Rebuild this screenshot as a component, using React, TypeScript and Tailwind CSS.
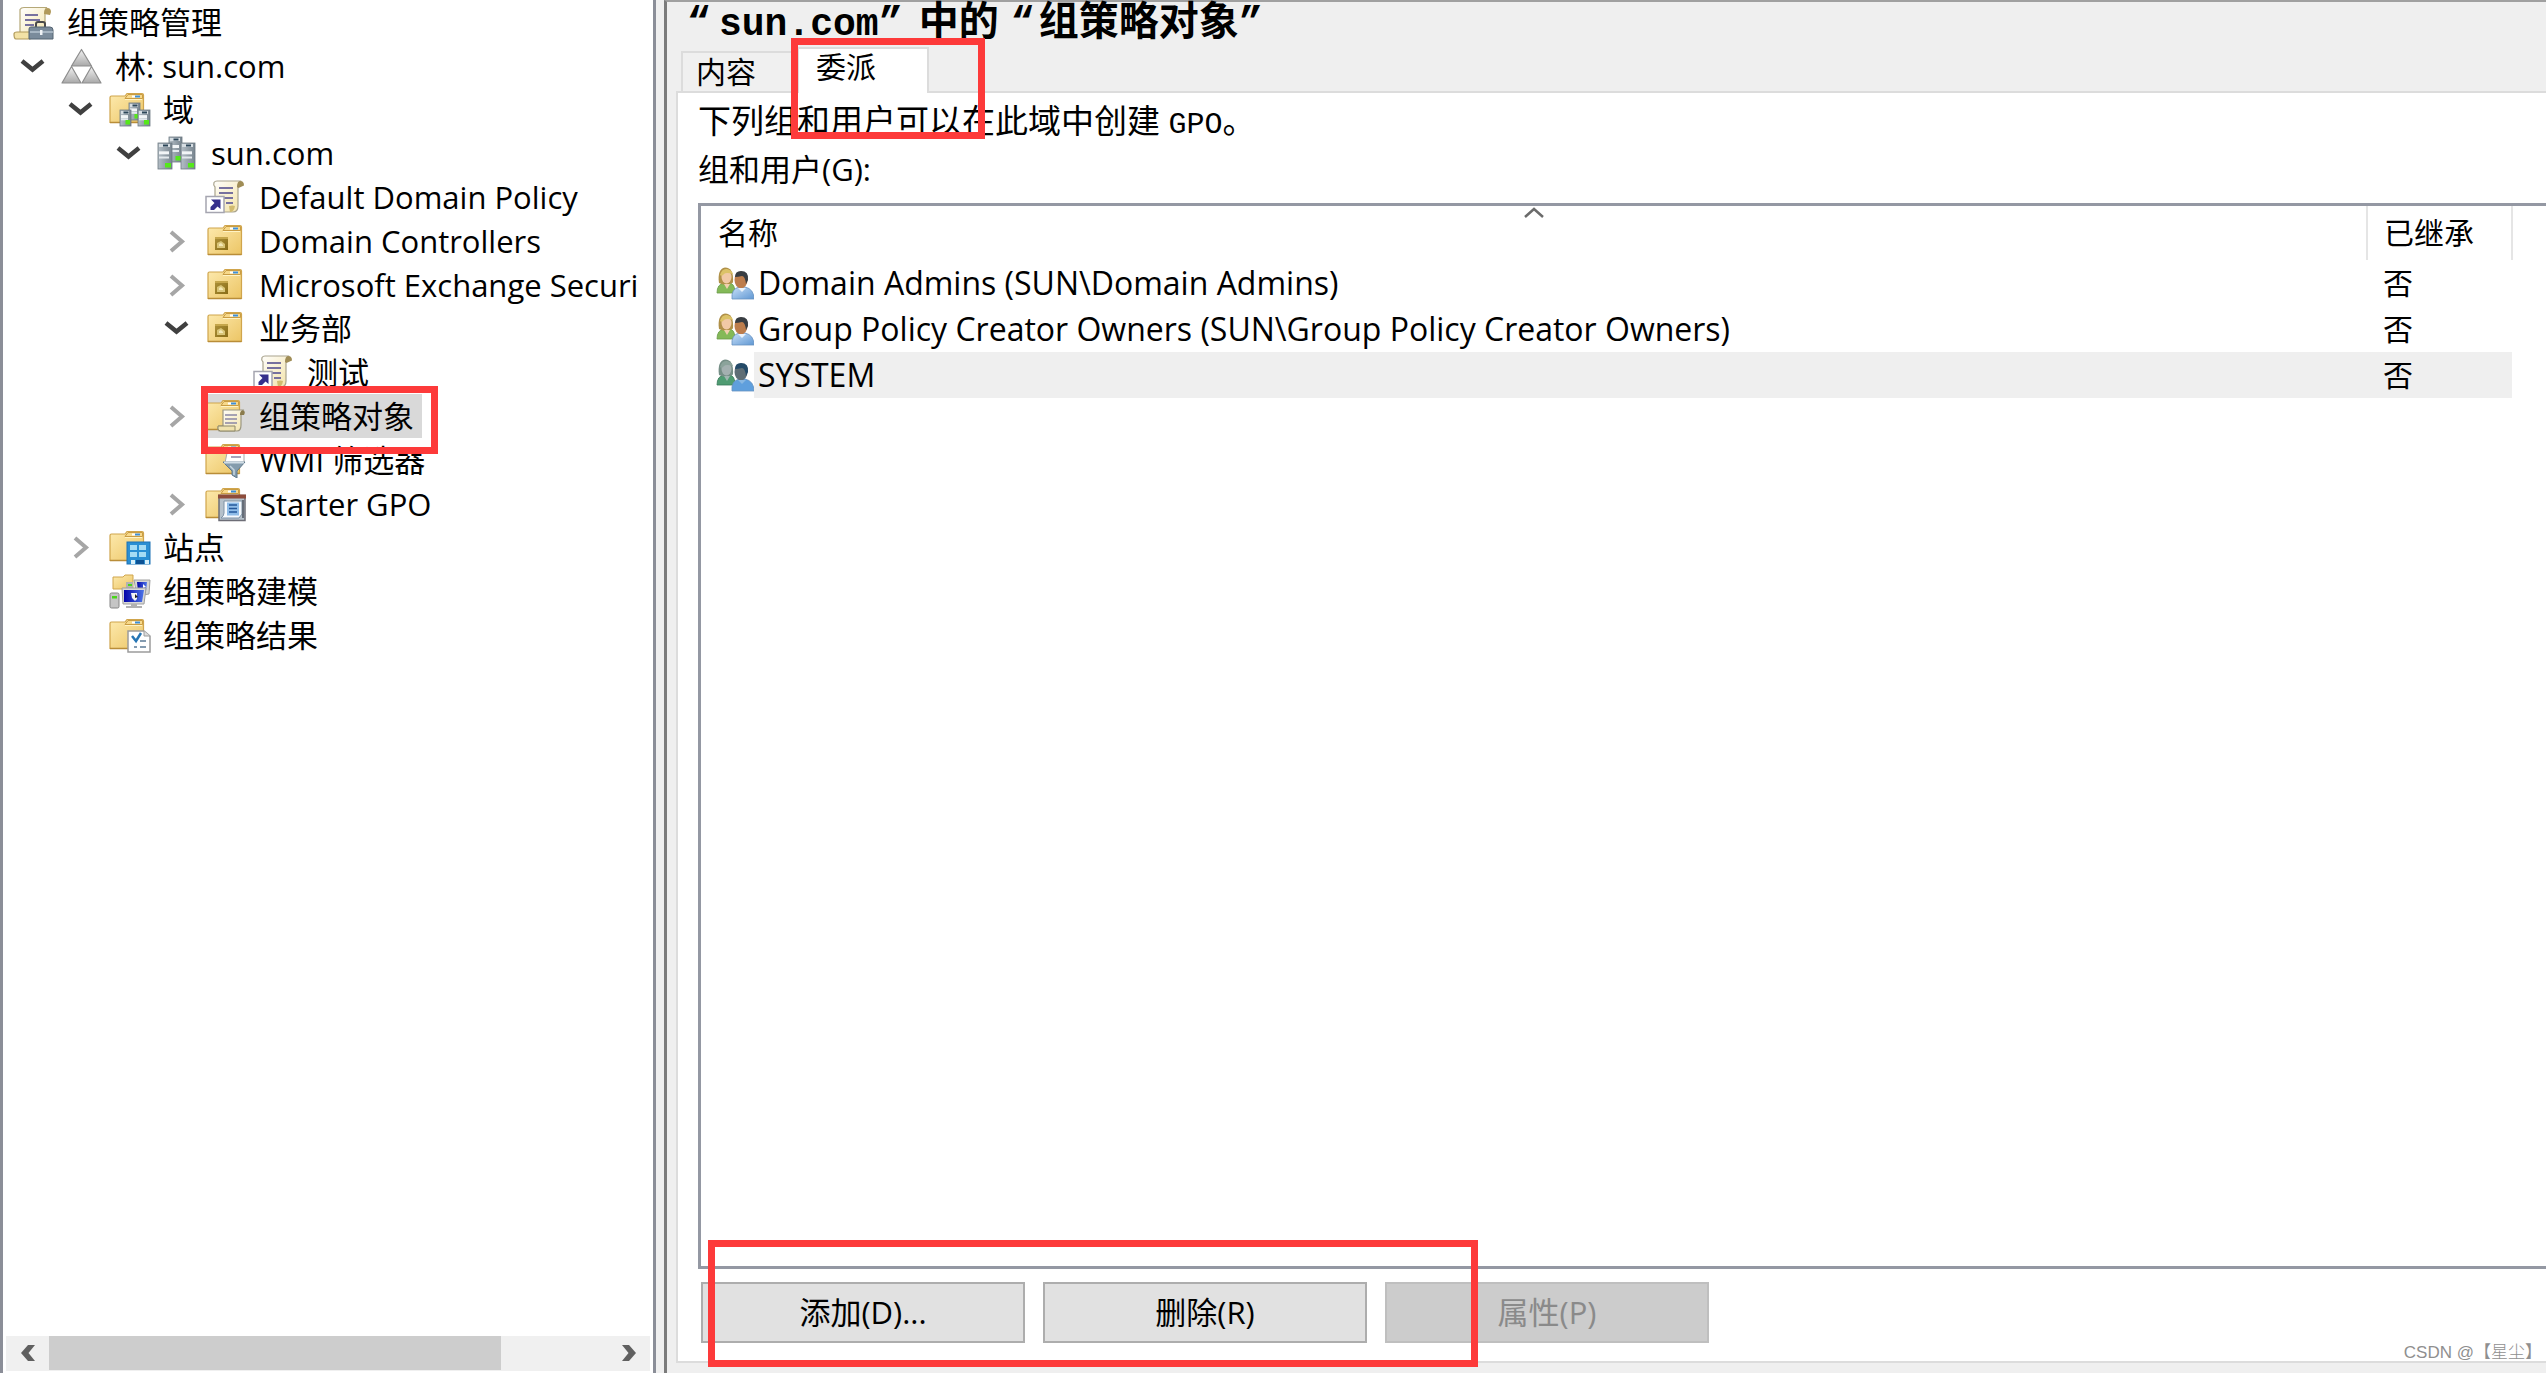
import { useState } from "react"
import type { ReactNode } from "react"
import { clsx } from "clsx"

type TreeNode = {
  label: string
  depth: number
  icon: ReactNode
  state?: "open" | "closed"
  selected?: boolean
}

function Defs() {
  return (
    <svg width="0" height="0" className="absolute" aria-hidden="true">
      <defs>
        <linearGradient id="folder" x1="0" y1="0" x2="1" y2="1">
          <stop offset="0" stopColor="#fdeaae" />
          <stop offset="1" stopColor="#ecc565" />
        </linearGradient>
        <linearGradient id="paper" x1="0" y1="0" x2="1" y2="1">
          <stop offset="0" stopColor="#ffffff" />
          <stop offset="1" stopColor="#f3e3a8" />
        </linearGradient>
        <linearGradient id="steel" x1="0" y1="0" x2="1" y2="0">
          <stop offset="0" stopColor="#b4bec6" />
          <stop offset="1" stopColor="#78858f" />
        </linearGradient>
        <linearGradient id="silver" x1="0" y1="0" x2="0" y2="1">
          <stop offset="0" stopColor="#f2f2f2" />
          <stop offset="1" stopColor="#a9a9a9" />
        </linearGradient>
        <linearGradient id="olive" x1="0" y1="0" x2="1" y2="1">
          <stop offset="0" stopColor="#ad913a" />
          <stop offset="1" stopColor="#8a6d17" />
        </linearGradient>
        <linearGradient id="sky" x1="0" y1="0" x2="1" y2="1">
          <stop offset="0" stopColor="#c9e0f8" />
          <stop offset="1" stopColor="#5f97d3" />
        </linearGradient>
        <linearGradient id="screen" x1="0" y1="0" x2="1" y2="0">
          <stop offset="0" stopColor="#0404a8" />
          <stop offset="1" stopColor="#4c74e8" />
        </linearGradient>
      </defs>
    </svg>
  )
}

function Icon({ children }: { children: ReactNode }) {
  return (
    <svg viewBox="0 0 42 36" width="42" height="36" className="shrink-0" aria-hidden="true">
      {children}
    </svg>
  )
}

function Folder() {
  return (
    <g>
      <path d="M1 6.5q0-1.5 1.500-1.500H16l2-2.500h15q1.500 0 1.500 1.500V31.500H1z" fill="url(#folder)" stroke="#d0a54c" strokeWidth="1.200" />
      <path d="M16 7.500l3-4h14.500v4z" fill="#f7d98b" stroke="#c99c43" strokeWidth="1" />
      <rect x="23" y="4.500" width="8" height="2" fill="#fff" />
      <rect x="26" y="4.500" width="5" height="2" fill="#3f8fd6" />
      <path d="M16 8.500h17" stroke="#fff3c4" strokeWidth="1" />
      <path d="M1 31.500h33.500" stroke="#b98d38" strokeWidth="1.500" />
    </g>
  )
}

function Tower({ x, y, w, h }: { x: number; y: number; w: number; h: number }) {
  return (
    <g>
      <rect x={x} y={y} width={w} height={h} fill="url(#steel)" stroke="#6d7982" strokeWidth="0.800" />
      <rect x={x + 1} y={y + 1} width={w - 3} height="3" fill="#d6dde2" />
      <rect x={x + w / 2 - 2} y={y + 1.5} width="5" height="2" fill="#2c4658" />
      <rect x={x + 1} y={y + h * 0.32} width={w - 4} height="3" fill="#f2f5f7" />
      <rect x={x + 1} y={y + h * 0.52} width={w - 4} height="2" fill="#e2e8ec" />
      <rect x={x + w / 2} y={y + h - 6} width={w / 2 - 1} height="4.500" fill="#55e81b" />
    </g>
  )
}

function Scroll() {
  return (
    <g>
      <path d="M9 3.500q1-1.500 3-1.500H35q-2 2-2 6V27q0 6-5 6H6q4-1 4-6V8q-2-2-1-4.500z" fill="url(#paper)" stroke="#a9a38d" strokeWidth="1.200" />
      <path d="M32 8q0-6 3.500-6T39 6.500L33.500 9z" fill="#a08d56" />
      <path d="M24 27q4-1 6 0-1 6-5 6z" fill="#d1bb70" />
      <path d="M14 9h14M14 14h14M17 19h11M21 24h7" stroke="#77719f" strokeWidth="1.800" />
    </g>
  )
}

function ConsoleIcon() {
  return (
    <Icon>
      <path d="M7 5.500Q8 3.500 11 3.500H34q-2 1-2 6V33H7z" fill="url(#paper)" stroke="#b5a878" strokeWidth="1.200" />
      <path d="M31 10q0-6 3.500-6T38 8l-1 3z" fill="#b19a5b" />
      <path d="M12 11h13M12 16h15M12 21h9" stroke="#77719f" strokeWidth="1.800" />
      <path d="M1 30q0-2 3-2h13v7H3q-2 0-2-5z" fill="#f3e2a6" stroke="#b19a5b" strokeWidth="1.200" />
      <path d="M23 24v-4q0-2 2-2h5q2 0 2 2v4" fill="none" stroke="#4a4a4a" strokeWidth="2" />
      <path d="M16 25q0-2 2-2h19q3 0 3 3v9H16z" fill="#7a8b9b" stroke="#556473" strokeWidth="1" />
      <path d="M17 28h23" stroke="#b6c3cf" strokeWidth="1.500" />
      <rect x="27" y="26" width="2.500" height="5" fill="#eef2f5" />
    </Icon>
  )
}

function ForestIcon() {
  return (
    <Icon>
      <g fill="url(#silver)" stroke="#8d8d8d" strokeWidth="1.200" strokeLinejoin="round">
        <path d="M20.500 1.500L30.500 18h-20z" />
        <path d="M10.500 18.500L20 35H1z" />
        <path d="M30.500 18.500L40 35H21z" />
      </g>
    </Icon>
  )
}

function DomainsIcon() {
  return (
    <Icon>
      <Folder />
      <Tower x={20} y={12} w={11} h={17} />
      <Tower x={11} y={19} w={11} h={16} />
      <Tower x={29} y={19} w={12} h={16} />
    </Icon>
  )
}

function DomainIcon() {
  return (
    <Icon>
      <Tower x={12} y={2} w={13} h={25} />
      <Tower x={1} y={8} w={14} h={26} />
      <Tower x={24} y={8} w={14} h={26} />
    </Icon>
  )
}

function LinkIcon() {
  return (
    <Icon>
      <Scroll />
      <rect x="1" y="17.500" width="18" height="16" fill="#fff" stroke="#a5a5b0" strokeWidth="1.500" />
      <path d="M6 20.500h9.500V30l-3-2.500-3.500 3.500H5.500v-3l4-4z" fill="#352f8c" />
    </Icon>
  )
}

function UnitIcon() {
  return (
    <Icon>
      <g transform="translate(2 0)">
        <Folder />
        <rect x="8" y="14" width="13" height="13" fill="url(#olive)" />
        <rect x="8" y="14" width="13" height="2" fill="#c5a64b" />
        <path d="M10 25v-5l4-2 4 3v4z" fill="#d9c578" />
        <path d="M12 23v-2l2-1 2 2v1z" fill="#f3e8b5" />
      </g>
    </Icon>
  )
}

function ObjectsIcon() {
  return (
    <Icon>
      <Folder />
      <path d="M18 12h21q-3 1-3 5v10q0 6-4 6H14q-2-3 0-5h4z" fill="url(#paper)" stroke="#9b9781" strokeWidth="1.200" />
      <path d="M35 17q0-5 3-4.500t1 4.500z" fill="#8b7c4d" />
      <path d="M13 28h17v5H15q-3-1-2-5z" fill="#efe2ad" stroke="#8d8769" strokeWidth="1" />
      <path d="M20 17h12M20 21h12M20 25h12" stroke="#8a86a5" strokeWidth="1.500" />
    </Icon>
  )
}

function FilterIcon() {
  return (
    <Icon>
      <Folder />
      <path d="M22 11h17v10H20z" fill="#fff" stroke="#aaa" strokeWidth="1" />
      <path d="M26 15h10" stroke="#8a86a5" strokeWidth="1.500" />
      <path d="M18 20h22l-8 9v7l-5-3v-4z" fill="#849cad" stroke="#60788a" strokeWidth="1" />
      <path d="M19 20.500h20" stroke="#d1dde5" strokeWidth="2" />
      <path d="M25 24l4 4v5" fill="none" stroke="#c7d6e0" strokeWidth="1.500" />
    </Icon>
  )
}

function StarterIcon() {
  return (
    <Icon>
      <Folder />
      <rect x="14" y="9.500" width="26" height="25" fill="#b5c1ca" stroke="#6d6d76" strokeWidth="1.500" />
      <rect x="13" y="8.500" width="28" height="4" fill="#8d4c3b" />
      <path d="M19 15h18v13l-3 4H16q3-2 3-5z" fill="#f6fafd" stroke="#7e92a5" strokeWidth="1" />
      <path d="M22 16.500h12v13H22z" fill="#8fbde8" />
      <path d="M24 19h8M24 22.500h8M24 26h8" stroke="#24589a" strokeWidth="1.500" />
      <path d="M38 14v18" stroke="#666e79" strokeWidth="2" />
    </Icon>
  )
}

function SitesIcon() {
  return (
    <Icon>
      <Folder />
      <rect x="18" y="13" width="23" height="22" fill="#2a8fd3" stroke="#1c72b5" strokeWidth="1" />
      <path d="M21 16h7v5h-7zM30 16h7v5h-7zM21 23h7v5h-7zM30 23h7v5h-7z" fill="#a5dcf4" />
      <path d="M22 31h4v4h-4zM36 31h4v4h-4z" fill="#d6f0fb" />
      <path d="M27 31h8v4h-8z" fill="#0b5295" />
    </Icon>
  )
}

function ModelingIcon() {
  return (
    <Icon>
      <path d="M4 4h10l2-2h8v14H4z" fill="url(#folder)" stroke="#d0a54c" strokeWidth="1" />
      <path d="M25 7h16l-1 14-12 2z" fill="#d5d5d5" stroke="#a0a0a0" strokeWidth="1" />
      <path d="M28 9h10l-1 9h-8z" fill="url(#screen)" />
      <path d="M34 11l3 3-3 1z" fill="#fff" />
      <rect x="17" y="9" width="7" height="7" fill="#b2b2b2" />
      <rect x="19" y="11" width="4" height="2" fill="#49d51c" />
      <path d="M13 15h24l-2 16H14z" fill="#d8d8d8" stroke="#9f9f9f" strokeWidth="1" />
      <path d="M15 17h20l-2 12H15z" fill="url(#screen)" />
      <path d="M22 20h6v6l-2 2-3-3z" fill="#f3f3f3" />
      <path d="M26 21l3 3-3 1z" fill="#222" />
      <path d="M22 31h6v2h5v2H17v-2h5z" fill="#b1b1b1" />
      <rect x="1" y="20" width="9" height="15" rx="1.500" fill="#c5c5c5" stroke="#858585" strokeWidth="1" />
      <rect x="3" y="23" width="5" height="2.500" fill="#49d51c" />
    </Icon>
  )
}

function ResultsIcon() {
  return (
    <Icon>
      <Folder />
      <path d="M19 14h16l6 5v16H19z" fill="#fff" stroke="#9c9c9c" strokeWidth="1.500" />
      <path d="M35 14v5h6" fill="#ddd" stroke="#9c9c9c" strokeWidth="1" />
      <path d="M23 19l4 5 5-8" fill="none" stroke="#2676b5" strokeWidth="2.500" />
      <path d="M31 24h6M25 30h3M31 30h6" stroke="#849bb0" strokeWidth="2" />
    </Icon>
  )
}

function UsersIcon({ muted }: { muted?: boolean }) {
  return (
    <svg viewBox="0 0 38 34" width="38" height="34" className="shrink-0" aria-hidden="true">
      <path d="M1 27q0-9 7-10h6q5 1 5 10z" fill={muted ? "#4f9c72" : "#84b958"} stroke={muted ? "#397a59" : "#6a9a48"} strokeWidth="0.800" />
      <path d="M3 17Q1 3 9 1.500q9 0 8 15l-4 2H7z" fill={muted ? "#758e86" : "#b09048"} />
      <ellipse cx="10.500" cy="11" rx="5" ry="6.500" fill={muted ? "#a3b0b0" : "#f1c9a6"} />
      <path d="M4 9Q6 2 11 3q5 1 6 5-7-2-9 0-2 3-4 1z" fill={muted ? "#8ba39b" : "#dcc268"} />
      <path d="M8 18l3 5 3-5z" fill={muted ? "#9fb5b0" : "#f1cfae"} />
      <path d="M16 33q-1-10 7-12h6q9 2 9 12z" fill={muted ? "#5f9fdd" : "url(#sky)"} stroke="#6792c0" strokeWidth="0.800" />
      <ellipse cx="25" cy="14" rx="6.500" ry="8.500" fill={muted ? "#5f6e76" : "#bd7d4c"} />
      <path d="M19 11Q19 5 25 5q8 0 7 9l-2 4q-1-8-4-8-4 1-7 1z" fill={muted ? "#244a68" : "#383d42"} />
      <path d="M22 22l4 4 4-4z" fill={muted ? "#88b7e2" : "#eaf3fc"} />
    </svg>
  )
}

const nodes: TreeNode[] = [
  { label: "组策略管理", depth: 0, icon: <ConsoleIcon /> },
  { label: "林: sun.com", depth: 1, icon: <ForestIcon />, state: "open" },
  { label: "域", depth: 2, icon: <DomainsIcon />, state: "open" },
  { label: "sun.com", depth: 3, icon: <DomainIcon />, state: "open" },
  { label: "Default Domain Policy", depth: 4, icon: <LinkIcon /> },
  { label: "Domain Controllers", depth: 4, icon: <UnitIcon />, state: "closed" },
  { label: "Microsoft Exchange Securi", depth: 4, icon: <UnitIcon />, state: "closed" },
  { label: "业务部", depth: 4, icon: <UnitIcon />, state: "open" },
  { label: "测试", depth: 5, icon: <LinkIcon /> },
  { label: "组策略对象", depth: 4, icon: <ObjectsIcon />, state: "closed", selected: true },
  { label: "WMI 筛选器", depth: 4, icon: <FilterIcon /> },
  { label: "Starter GPO", depth: 4, icon: <StarterIcon />, state: "closed" },
  { label: "站点", depth: 2, icon: <SitesIcon />, state: "closed" },
  { label: "组策略建模", depth: 2, icon: <ModelingIcon /> },
  { label: "组策略结果", depth: 2, icon: <ResultsIcon /> },
]

const indents = ["pl-[10px]", "pl-[10px]", "pl-[58px]", "pl-[106px]", "pl-[154px]", "pl-[202px]"]

const members = [
  { name: "Domain Admins (SUN\\Domain Admins)", inherited: "否" },
  { name: "Group Policy Creator Owners (SUN\\Group Policy Creator Owners)", inherited: "否" },
  { name: "SYSTEM", inherited: "否", active: true },
]

function Chevron({ state }: { state: "open" | "closed" }) {
  return (
    <button
      type="button"
      aria-label={state === "open" ? "折叠" : "展开"}
      className="flex w-12 shrink-0 items-center"
    >
      <svg viewBox="0 0 36 24" width="36" height="24" fill="none" aria-hidden="true">
        {state === "open" ? (
          <path d="M9 7l10.500 8.500L30 7" stroke="#404040" strokeWidth="4.500" />
        ) : (
          <path d="M14 3l11 9.500L14 22" stroke="#a6a6a6" strokeWidth="4" />
        )}
      </svg>
    </button>
  )
}

function TreeRow({ node }: { node: TreeNode }) {
  return (
    <li
      role="treeitem"
      aria-selected={!!node.selected}
      className={clsx("flex min-h-0 items-center whitespace-nowrap", indents[node.depth])}
    >
      {node.state ? <Chevron state={node.state} /> : node.depth > 0 && <span className="w-12 shrink-0" />}
      <span className={clsx("relative flex h-full items-center gap-3 pr-2", node.selected && "bg-[#d9d9d9]")}>
        {node.icon}
        <span>{node.label}</span>
        {node.selected && (
          <span className="absolute -top-2 -right-4 -bottom-4 -left-1 z-10 border-[7px] border-[#fd3a3a]" />
        )}
      </span>
    </li>
  )
}

function ScrollArrow({ dir }: { dir: "left" | "right" }) {
  return (
    <button type="button" aria-label={dir === "left" ? "向左滚动" : "向右滚动"} className="flex w-[43px] items-center justify-center">
      <svg viewBox="0 0 16 18" width="16" height="18" aria-hidden="true">
        <path d={dir === "left" ? "M8 1h7L8.500 9l6.500 8H8L1 9z" : "M8 1H1l6.500 8L1 17h7l7-8z"} fill="#606060" />
      </svg>
    </button>
  )
}

function Sidebar() {
  return (
    <nav className="flex w-[656px] shrink-0 flex-col border-x-[3px] border-[#8b8e98] bg-white">
      <ul role="tree" aria-label="组策略管理" className="grid h-[657px] auto-rows-fr overflow-hidden">
        {nodes.map((node, i) => (
          <TreeRow key={i} node={node} />
        ))}
      </ul>
      <div className="mx-[3px] mt-auto mb-0.5 flex h-[35px] bg-[#f0f0f0] pb-px">
        <ScrollArrow dir="left" />
        <div className="flex-1">
          <div className="h-full w-[81%] bg-[#cdcdcd]" />
        </div>
        <ScrollArrow dir="right" />
      </div>
    </nav>
  )
}

function ActionButton({ children, disabled }: { children: ReactNode; disabled?: boolean }) {
  return (
    <button
      type="button"
      disabled={disabled}
      className={clsx(
        "h-[61px] w-[324px] border-2 pb-0.5 text-center",
        disabled ? "border-[#bfbfbf] bg-[#cccccc] text-[#8a8a8a]" : "border-[#adadad] bg-[#e1e1e1]"
      )}
    >
      {children}
    </button>
  )
}

export default function App() {
  const [tab, setTab] = useState("委派")

  return (
    <div
      lang="zh-CN"
      className="relative flex h-screen overflow-hidden bg-[#efefef] font-['Open_Sans','Noto_Sans_CJK_SC',sans-serif] text-[31px] leading-9 text-black"
    >
      <Defs />
      <Sidebar />

      <main className="ml-2 flex min-w-0 flex-1 flex-col border-t-2 border-l-[3px] border-t-[#a0a0a0] border-l-[#7b7b7b] pb-2.5 pl-[9px]">
        <h1 className="h-[45px] pl-[3px] font-['Liberation_Mono','Noto_Sans_CJK_SC',monospace] text-[40px] leading-[46px] font-bold whitespace-nowrap">
          <span className="px-2">“</span>
          <span className="text-[38px]">sun.com</span>
          <span className="pr-4">”</span>中的<span className="pl-3 pr-1">“</span>组策略对象”
        </h1>

        <div role="tablist" className="relative z-10 -mb-0.5 flex h-[46px] items-end pl-[5px] text-[30px]">
          {["内容", "委派"].map((name) => (
            <button
              key={name}
              type="button"
              role="tab"
              aria-selected={tab === name}
              onClick={() => setTab(name)}
              className={clsx(
                "border-2 border-[#dcdcdc] text-left",
                tab === name
                  ? "h-[46px] w-[132px] border-b-0 bg-white pb-2 pl-[17px]"
                  : "h-[42px] w-[116px] border-r-0 bg-[#f0f0f0] pl-[13px]"
              )}
            >
              {name}
            </button>
          ))}
          <span className="pointer-events-none absolute -top-[9px] left-[115px] h-[101px] w-[194px] border-[7px] border-[#fd3a3a]" />
        </div>

        <section className="flex flex-1 flex-col border-2 border-r-0 border-[#dcdcdc] bg-white pt-2.5 pl-5">
          <p className="h-9 text-[33px]">
            下列组和用户可以在此域中创建 <span className="font-['Liberation_Mono',monospace] text-[30px]">GPO</span>。
          </p>
          <h2 id="members" className="mt-3">组和用户(G):</h2>

          <div className="mt-4 flex-1 border-[3px] border-r-0 border-[#9498a3]">
            <table aria-labelledby="members" className="w-full table-fixed border-collapse text-left text-[30px]">
              <thead>
                <tr className="h-[54px]">
                  <th className="relative border-r-2 border-[#e5e5e5] pl-[17px] font-normal">
                    名称
                    <svg viewBox="0 0 22 12" width="22" height="12" className="absolute top-0 left-1/2 -translate-x-1/2" fill="none" aria-hidden="true">
                      <path d="M2 11l9-8 9 8" stroke="#6b6b6b" strokeWidth="2.500" />
                    </svg>
                  </th>
                  <th className="w-[145px] border-r-2 border-[#e5e5e5] pl-4 font-normal">已继承</th>
                  <th className="w-[34px]" aria-label="空" />
                </tr>
              </thead>
              <tbody>
                {members.map((m) => (
                  <tr key={m.name} className="h-[46px]">
                    <td className="p-0">
                      <div className="flex h-[46px] items-center pl-[15px]">
                        <UsersIcon muted={m.active} />
                        <span className={clsx("flex h-full flex-1 items-center pl-1 text-[32px]", m.active && "bg-[#efefef]")}>
                          {m.name}
                        </span>
                      </div>
                    </td>
                    <td className={clsx("p-0 pl-4", m.active && "bg-[#efefef]")}>{m.inherited}</td>
                    <td />
                  </tr>
                ))}
              </tbody>
            </table>
          </div>

          <div className="relative mt-[13px] mb-[18px] flex gap-[18px] pl-[3px]">
            <ActionButton>添加(D)...</ActionButton>
            <ActionButton>删除(R)</ActionButton>
            <ActionButton disabled>属性(P)</ActionButton>
            <span className="pointer-events-none absolute -top-[42px] left-[10px] h-[127px] w-[770px] border-[7px] border-[#fd3a3a]" />
          </div>
        </section>
      </main>

      <span className="absolute right-1 bottom-0.5 font-['Liberation_Sans','Noto_Sans_CJK_SC',sans-serif] text-[17px] font-light text-[#8f8f8f]">
        CSDN @【星尘】
      </span>
    </div>
  )
}
